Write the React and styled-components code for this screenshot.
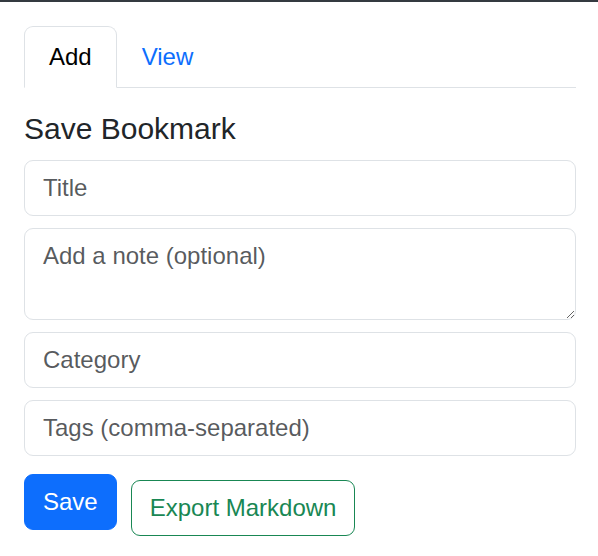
import React, { useState } from 'react';
import styled, { createGlobalStyle } from 'styled-components';

const GlobalStyle = createGlobalStyle`
  * { box-sizing: border-box; }
  body {
    margin: 0;
    background: #ffffff;
    font-family: 'Liberation Sans', Arial, sans-serif;
    color: #212529;
    border-top: 2px solid #343a40;
  }
`;

const Page = styled.div`
  padding: 24px 22px 24px 24px;
`;

const Tabs = styled.ul`
  display: flex;
  list-style: none;
  margin: 0;
  padding: 0;
  border-bottom: 1px solid #dee2e6;
`;

const TabButton = styled.button`
  font: inherit;
  font-size: 24px;
  line-height: 36px;
  padding: 12px 24px;
  margin-bottom: -1px;
  background: ${(p) => (p.$active ? '#ffffff' : 'transparent')};
  color: ${(p) => (p.$active ? '#000000' : '#0d6efd')};
  border: 1px solid ${(p) => (p.$active ? '#dee2e6' : 'transparent')};
  border-bottom-color: ${(p) => (p.$active ? '#ffffff' : 'transparent')};
  border-radius: 9px 9px 0 0;
  cursor: pointer;
`;

const Heading = styled.h5`
  font-size: 30px;
  font-weight: 400;
  line-height: 36px;
  margin: 23px 0 13px;
  color: #212529;
`;

const Form = styled.form`
  display: flex;
  flex-direction: column;
  gap: 12px;
`;

const fieldStyles = `
  display: block;
  width: 100%;
  font-family: 'Liberation Sans', Arial, sans-serif;
  font-size: 24px;
  line-height: 36px;
  padding: 9px 18px;
  color: #212529;
  background: #ffffff;
  border: 1px solid #dee2e6;
  border-radius: 9px;
  outline: none;
  &::placeholder { color: rgba(33, 37, 41, 0.75); }
`;

const Input = styled.input`
  ${fieldStyles}
`;

const TextArea = styled.textarea`
  ${fieldStyles}
  height: 92px;
  resize: vertical;
`;

const ButtonRow = styled.div`
  display: flex;
  align-items: flex-start;
  gap: 14px;
  margin-top: 6px;
`;

const Button = styled.button`
  font-family: 'Liberation Sans', Arial, sans-serif;
  font-size: 24px;
  line-height: 36px;
  padding: 9px 18px;
  border-radius: 9px;
  cursor: pointer;
  border: 1px solid ${(p) => (p.$variant === 'success' ? '#198754' : '#0d6efd')};
  background: ${(p) => (p.$variant === 'success' ? '#ffffff' : '#0d6efd')};
  color: ${(p) => (p.$variant === 'success' ? '#198754' : '#ffffff')};
  margin-top: ${(p) => p.$offset || 0}px;
`;

export default function App() {
  const [tab, setTab] = useState('add');

  return (
    <Page>
      <GlobalStyle />
      <Tabs>
        <li>
          <TabButton $active={tab === 'add'} onClick={() => setTab('add')}>
            Add
          </TabButton>
        </li>
        <li>
          <TabButton $active={tab === 'view'} onClick={() => setTab('view')}>
            View
          </TabButton>
        </li>
      </Tabs>
      <Heading>Save Bookmark</Heading>
      <Form onSubmit={(e) => e.preventDefault()}>
        <Input placeholder="Title" />
        <TextArea placeholder="Add a note (optional)" rows={2} />
        <Input placeholder="Category" />
        <Input placeholder="Tags (comma-separated)" />
        <ButtonRow>
          <Button type="submit">Save</Button>
          <Button type="button" $variant="success" $offset={6}>
            Export Markdown
          </Button>
        </ButtonRow>
      </Form>
    </Page>
  );
}
